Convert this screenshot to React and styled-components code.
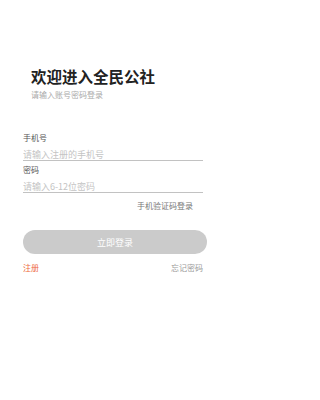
import React from "react";
import styled, { createGlobalStyle } from "styled-components";

const GlobalStyle = createGlobalStyle`
  html, body {
    margin: 0;
    padding: 0;
    background: #fff;
  }
  body {
    font-family: "Noto Sans CJK SC", "Noto Sans", sans-serif;
  }
`;

const Page = styled.div`
  width: 225px;
  min-height: 400px;
  padding: 69px 22px 0 23px;
  box-sizing: border-box;
`;

const Heading = styled.div`
  padding-left: 8px;
`;

const Title = styled.h1`
  margin: 0;
  font-size: 15.5px;
  line-height: 15px;
  font-weight: 700;
  color: #222;
`;

const Subtitle = styled.p`
  margin: 7px 0 0;
  font-size: 8px;
  line-height: 8px;
  color: #aaa;
`;

const Form = styled.form`
  margin-top: 35px;
`;

const Label = styled.label`
  display: block;
  margin-top: ${(p) => p.gap}px;
  font-size: 8px;
  line-height: 8px;
  color: #555;
`;

const Input = styled.input`
  display: block;
  width: 100%;
  box-sizing: border-box;
  height: 12px;
  margin-top: ${(p) => p.gap}px;
  padding: 0 0 1px;
  border: none;
  border-bottom: 1px solid #c2c2c2;
  outline: none;
  background: transparent;
  font-family: inherit;
  font-size: 9px;
  line-height: 10px;
  color: #333;

  &::placeholder {
    color: #c4c4c4;
  }
`;

const SmsLink = styled.a`
  display: block;
  margin-top: 9px;
  padding-right: 10px;
  text-align: right;
  font-size: 8px;
  line-height: 8px;
  color: #777;
  text-decoration: none;
`;

const Submit = styled.button`
  display: flex;
  align-items: center;
  justify-content: center;
  width: 184px;
  height: 24px;
  margin-top: 20px;
  border: none;
  border-radius: 12px;
  background: #cbcbcb;
  color: #fff;
  font-family: inherit;
  font-size: 9px;
  padding: 0;
`;

const Footer = styled.div`
  display: flex;
  justify-content: space-between;
  align-items: center;
  margin-top: 10px;
  font-size: 8px;
  line-height: 8px;
`;

const FooterLink = styled.a`
  color: ${(p) => (p.accent ? "#ee6a40" : "#999")};
  text-decoration: none;
`;

export default function App() {
  return (
    <>
      <GlobalStyle />
      <Page>
        <Heading>
          <Title>欢迎进入全民公社</Title>
          <Subtitle>请输入账号密码登录</Subtitle>
        </Heading>
        <Form onSubmit={(e) => e.preventDefault()}>
          <Label gap={0}>手机号</Label>
          <Input gap={7} placeholder="请输入注册的手机号" />
          <Label gap={5}>密码</Label>
          <Input gap={7} type="password" placeholder="请输入6-12位密码" />
          <SmsLink href="#">手机验证码登录</SmsLink>
          <Submit type="submit">立即登录</Submit>
          <Footer>
            <FooterLink href="#" accent>注册</FooterLink>
            <FooterLink href="#">忘记密码</FooterLink>
          </Footer>
        </Form>
      </Page>
    </>
  );
}
